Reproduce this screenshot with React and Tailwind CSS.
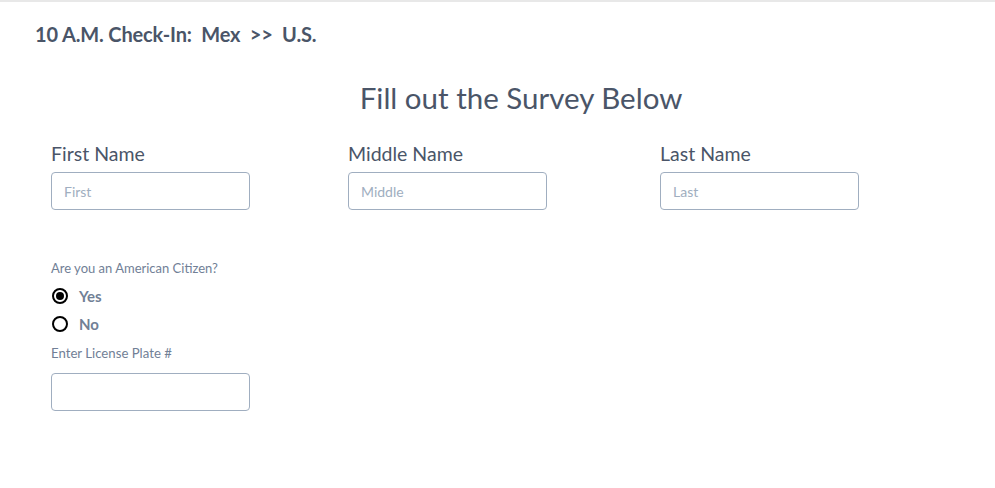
import React, { useState } from "react";

const Field = ({ label, placeholder }) => (
  <div className="flex flex-col w-[199px]">
    <label className="text-[19.5px] leading-[24px] text-[#4a5568] mb-[6px]">{label}</label>
    <input
      type="text"
      placeholder={placeholder}
      className="h-[38px] w-[199px] rounded-[4px] border border-[#a0aec0] px-[12px] text-[14px] text-[#4a5568] placeholder:text-[#a0aec0] outline-none"
    />
  </div>
);

const Radio = ({ label, checked, onChange }) => (
  <label className="flex items-center h-[28px] cursor-pointer">
    <span className="w-[16px] h-[16px] rounded-full border-2 border-black flex items-center justify-center ml-[1px]">
      {checked && <span className="w-[8px] h-[8px] rounded-full bg-black"></span>}
    </span>
    <input type="radio" className="sr-only" checked={checked} onChange={onChange} />
    <span className="ml-[11px] text-[15px] font-bold text-[#718096]">{label}</span>
  </label>
);

export default function App() {
  const [citizen, setCitizen] = useState("yes");

  return (
    <div className="min-h-[488px] bg-white border-t-2 border-[#e8e8e8] font-['Lato','Liberation_Sans',sans-serif]">
      <div className="pl-[35px] pt-[20px]">
        <h1 className="text-[20px] font-bold text-[#4a5568] leading-[24px] tracking-[-0.15px] whitespace-pre">
          {"10 A.M. Check-In:  Mex  >>  U.S."}
        </h1>
      </div>

      <h2 className="mt-[34px] text-center text-[29.5px] leading-[35px] text-[#4a5568] pl-[47px]">
        Fill out the Survey Below
      </h2>

      <div className="mt-[27px] pl-[51px] grid grid-cols-[297px_312px_199px]">
        <Field label="First Name" placeholder="First" />
        <Field label="Middle Name" placeholder="Middle" />
        <Field label="Last Name" placeholder="Last" />
      </div>

      <div className="pl-[51px] mt-[50px]">
        <p className="text-[13px] text-[#718096] leading-[16px] mb-[6px]">Are you an American Citizen?</p>
        <Radio label="Yes" checked={citizen === "yes"} onChange={() => setCitizen("yes")} />
        <Radio label="No" checked={citizen === "no"} onChange={() => setCitizen("no")} />
        <p className="text-[13.2px] text-[#718096] leading-[16px] mt-[7px] mb-[12px]">Enter License Plate #</p>
        <input
          type="text"
          className="h-[38px] w-[199px] rounded-[4px] border border-[#a0aec0] px-[12px] text-[14px] outline-none"
        />
      </div>
    </div>
  );
}
